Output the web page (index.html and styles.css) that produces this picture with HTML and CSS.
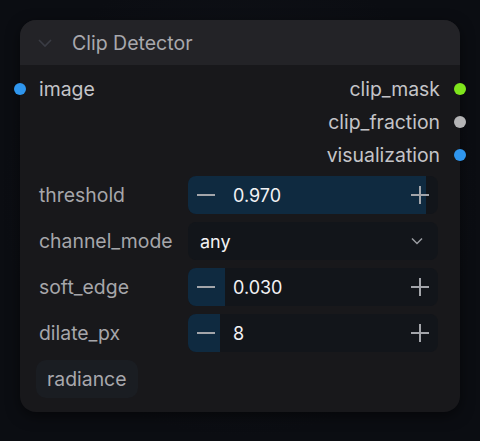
FILE: index.html
```html
<!DOCTYPE html>
<html lang="en">
<head>
    <meta charset="UTF-8">
    <title>Clip Detector</title>
    <link rel="stylesheet" href="styles.css">
</head>
<body>
    <div class="node">
        <div class="node-header">
            <svg class="collapse" width="16" height="10" viewBox="0 0 16 10"><path d="M2 2l6 6 6-6" fill="none" stroke="#3a3c44" stroke-width="1.6"/></svg>
            <span class="title">Clip Detector</span>
        </div>
        <div class="node-body">
            <div class="slots">
                <div class="slot-row">
                    <span class="slot in"><i class="dot blue left"></i>image</span>
                    <span class="slot out">clip_mask<i class="dot green right"></i></span>
                </div>
                <div class="slot-row">
                    <span></span>
                    <span class="slot out">clip_fraction<i class="dot grey right"></i></span>
                </div>
                <div class="slot-row">
                    <span></span>
                    <span class="slot out">visualization<i class="dot blue right"></i></span>
                </div>
            </div>

            <div class="widget-row">
                <label>threshold</label>
                <div class="widget number">
                    <div class="fill" style="width: 238px"></div>
                    <span class="btn minus"></span>
                    <span class="value">0.970</span>
                    <span class="btn plus"></span>
                </div>
            </div>
            <div class="widget-row">
                <label>channel_mode</label>
                <div class="widget combo">
                    <span class="value">any</span>
                    <svg class="arrow" width="14" height="8" viewBox="0 0 14 8"><path d="M2 1.5l5 5 5-5" fill="none" stroke="#9a9ca2" stroke-width="1.5"/></svg>
                </div>
            </div>
            <div class="widget-row">
                <label>soft_edge</label>
                <div class="widget number">
                    <div class="fill" style="width: 37px"></div>
                    <span class="btn minus"></span>
                    <span class="value">0.030</span>
                    <span class="btn plus"></span>
                </div>
            </div>
            <div class="widget-row">
                <label>dilate_px</label>
                <div class="widget number">
                    <div class="fill" style="width: 32px"></div>
                    <span class="btn minus"></span>
                    <span class="value">8</span>
                    <span class="btn plus"></span>
                </div>
            </div>

            <div class="tags">
                <span class="tag">radiance</span>
            </div>
        </div>
    </div>
</body>
</html>
```

FILE: styles.css
```css
*{
    box-sizing: border-box;
}
body{
    margin: 0;
    width: 480px;
    height: 441px;
    background: radial-gradient(circle at 50% 45%, #11141b 0%, #0b0d12 70%);
    font-family: Inter, "Noto Sans", sans-serif;
    padding: 20px;
}
.node{
    width: 440px;
    background-color: #18181b;
    border-radius: 16px;
    box-shadow: 0 4px 14px rgba(0, 0, 0, 0.5);
    position: relative;
}
.node-header{
    height: 45px;
    background-color: #232327;
    border-radius: 16px 16px 0 0;
    display: flex;
    align-items: center;
    padding-left: 17px;
}
.collapse{
    margin-right: 19px;
}
.title{
    color: #a8a8ad;
    font-size: 19.5px;
}
.node-body{
    padding: 7px 20px 14px 19px;
}
.slot-row{
    height: 33px;
    display: flex;
    justify-content: space-between;
    align-items: center;
}
.slot{
    color: #c4c4c8;
    font-size: 19.4px;
    position: relative;
}
.dot{
    position: absolute;
    top: 50%;
    width: 12px;
    height: 12px;
    margin-top: -6px;
    border-radius: 50%;
}
.dot.left{
    left: -25px;
}
.dot.right{
    right: -26px;
}
.blue{
    background-color: #2f96ee;
}
.green{
    background-color: #7fe51c;
}
.grey{
    background-color: #b4b4b6;
}
.widget-row{
    display: flex;
    align-items: center;
    margin-top: 8px;
    padding-right: 2px;
}
.slots + .widget-row{
    margin-top: 5px;
}
.widget-row label{
    width: 149px;
    color: #a6a6aa;
    font-size: 19.4px;
    white-space: nowrap;
}
.widget{
    flex: 1;
    height: 38px;
    background-color: #12151a;
    border-radius: 8px;
    display: flex;
    align-items: center;
    position: relative;
    overflow: hidden;
}
.fill{
    position: absolute;
    left: 0;
    top: 0;
    bottom: 0;
    background-color: #0f2a40;
}
.btn{
    position: relative;
    width: 18px;
    height: 18px;
    margin: 0 9px;
}
.btn::before,
.btn.plus::after{
    content: "";
    position: absolute;
    background-color: #a3a5aa;
    left: 0;
    top: 8px;
    width: 18px;
    height: 2px;
}
.btn.plus::after{
    left: 8px;
    top: 0;
    width: 2px;
    height: 18px;
}
.value{
    position: relative;
    flex: 1;
    color: #f2f2f4;
    font-size: 18px;
    padding-left: 9px;
}
.combo .value{
    padding-left: 12px;
}
.arrow{
    margin-right: 14px;
}
.tags{
    margin-top: 8px;
    display: flex;
}
.tag{
    background-color: #1a1d22;
    color: #a8a8ad;
    font-size: 19.4px;
    padding: 7px 11px;
    border-radius: 10px;
    margin-left: -3px;
}
```
